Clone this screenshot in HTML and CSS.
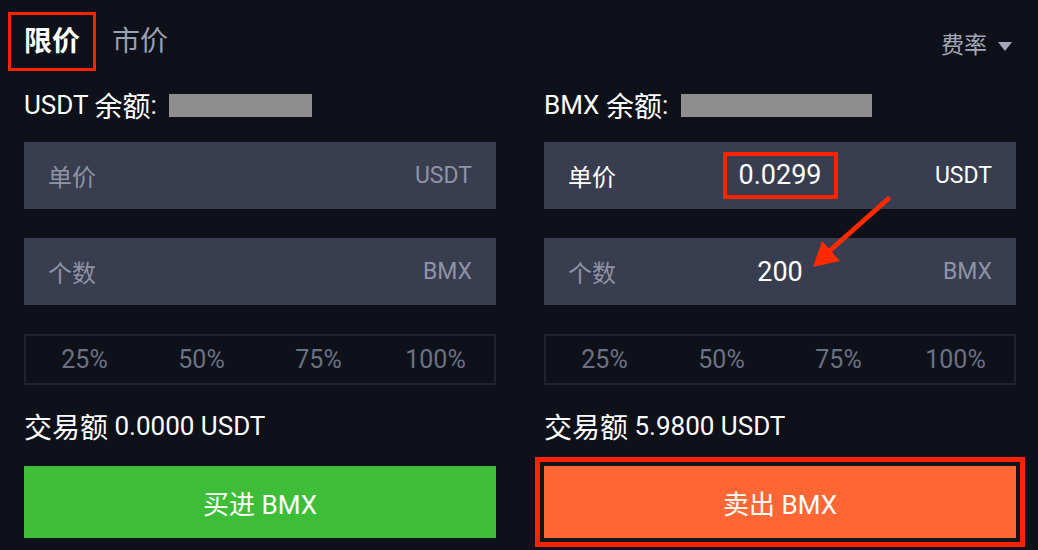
FILE: index.html
```html
<!DOCTYPE html>
<html lang="zh-CN">
<head>
    <meta charset="UTF-8">
    <meta name="viewport" content="width=device-width, initial-scale=1.0">
    <title>限价交易</title>
    <link rel="stylesheet" href="styles.css">
</head>
<body>
    <div class="trade">
        <div class="header">
            <div class="tabs">
                <span class="tab active">限价</span>
                <span class="tab">市价</span>
            </div>
            <div class="fee">费率 <span class="caret"></span></div>
        </div>

        <div class="columns">
            <!-- buy side -->
            <div class="col">
                <div class="balance">USDT <span class="cn">余额</span>: <span class="mask mask-buy"></span></div>
                <div class="field">
                    <span class="label">单价</span>
                    <span class="value"></span>
                    <span class="unit">USDT</span>
                </div>
                <div class="field">
                    <span class="label">个数</span>
                    <span class="value"></span>
                    <span class="unit">BMX</span>
                </div>
                <div class="percents">
                    <span>25%</span><span>50%</span><span>75%</span><span>100%</span>
                </div>
                <div class="total"><span class="cn">交易额</span> 0.0000 USDT</div>
                <button class="btn btn-buy">买进 BMX</button>
            </div>

            <!-- sell side -->
            <div class="col">
                <div class="balance">BMX <span class="cn">余额</span>: <span class="mask mask-sell"></span></div>
                <div class="field">
                    <span class="label filled">单价</span>
                    <span class="value marked">0.0299</span>
                    <span class="unit filled">USDT</span>
                </div>
                <div class="field">
                    <span class="label">个数</span>
                    <span class="value">200</span>
                    <span class="unit">BMX</span>
                </div>
                <div class="percents">
                    <span>25%</span><span>50%</span><span>75%</span><span>100%</span>
                </div>
                <div class="total"><span class="cn">交易额</span> 5.9800 USDT</div>
                <button class="btn btn-sell">卖出 BMX</button>
            </div>
        </div>

        <svg class="arrow" width="1038" height="550" viewBox="0 0 1038 550">
            <line x1="888" y1="199" x2="826" y2="254" stroke="#ff2a00" stroke-width="5" stroke-linecap="round"/>
            <polygon points="813,267 822,241 840,261" fill="#ff2a00"/>
        </svg>
    </div>
</body>
</html>
```

FILE: styles.css
```css
body {
    margin: 0;
    background: #0e111a;
    font-family: Roboto, "Noto Sans CJK SC", sans-serif;
    color: #fff;
}
.trade {
    position: relative;
    width: 1038px;
    height: 550px;
    box-sizing: border-box;
    padding: 12px 22px 0 24px;
    overflow: hidden;
}
.header {
    display: flex;
    justify-content: space-between;
    align-items: flex-start;
    height: 59px;
    margin-right: 4px;
}
.tabs {
    display: flex;
    align-items: center;
    margin-left: -16px;
}
.tab {
    font-size: 28px;
    line-height: 53px;
    color: #9aa0ae;
    border: 3px solid transparent;
    padding: 0 13px;
}
.tab.active {
    color: #fff;
    font-weight: bold;
    border-color: #ff2200;
}
.fee {
    display: flex;
    align-items: center;
    gap: 11px;
    margin-top: 19px;
    font-size: 23px;
    line-height: 30px;
    color: #a4a8b6;
}
.caret {
    width: 0;
    height: 0;
    border-left: 7.5px solid transparent;
    border-right: 7.5px solid transparent;
    border-top: 9px solid #a4a8b6;
}
.columns {
    display: grid;
    grid-template-columns: 1fr 1fr;
    gap: 48px;
}
.col {
    display: flex;
    flex-direction: column;
}
.cn {
    font-size: 28px;
}
.balance {
    display: flex;
    align-items: center;
    height: 34px;
    margin-top: 17px;
    font-size: 26px;
    white-space: pre;
}
.mask {
    display: inline-block;
    height: 23px;
    background: #8e8e8e;
    margin-left: 6px;
}
.mask-buy { width: 143px; }
.mask-sell { width: 191px; }
.field {
    display: grid;
    grid-template-columns: 1fr auto 1fr;
    align-items: center;
    height: 67px;
    margin-top: 20px;
    padding: 0 24px;
    background: #393d50;
}
.field + .field {
    margin-top: 29px;
}
.label {
    font-size: 24px;
    color: #8e93a5;
}
.unit {
    justify-self: end;
    font-size: 23px;
    color: #8e93a5;
}
.filled {
    color: #fff;
}
.value {
    font-size: 27px;
    color: #fff;
}
.value.marked {
    border: 4px solid #ff2200;
    padding: 0 12px;
    line-height: 39px;
}
.percents {
    display: grid;
    grid-template-columns: repeat(4, 1fr);
    align-items: center;
    justify-items: center;
    height: 51px;
    box-sizing: border-box;
    margin-top: 29px;
    border: 2px solid #202430;
    font-size: 25px;
    color: #6c7182;
}
.total {
    display: flex;
    align-items: center;
    height: 34px;
    margin-top: 24px;
    font-size: 26px;
    white-space: pre;
}
.btn {
    height: 72px;
    margin-top: 23px;
    border: none;
    font-family: inherit;
    font-size: 26px;
    color: #fff;
    cursor: pointer;
}
.btn-buy {
    background: #3ebd38;
}
.btn-sell {
    background: #fe6633;
    box-shadow: 0 0 0 4px #131419, 0 0 0 9px #ff2200;
}
.arrow {
    position: absolute;
    left: 0;
    top: 0;
    pointer-events: none;
}
```
